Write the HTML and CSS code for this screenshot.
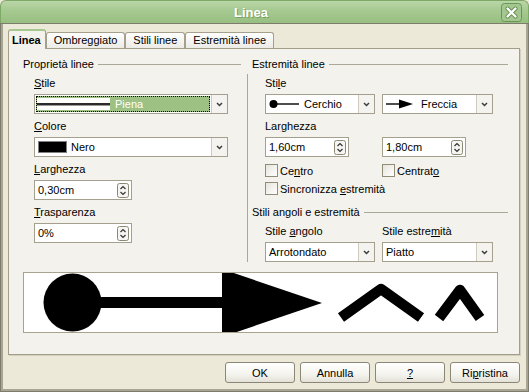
FILE: index.html
```html
<!DOCTYPE html>
<html>
<head>
<meta charset="utf-8">
<title>Linea</title>
<link rel="stylesheet" href="styles.css">
</head>
<body>
<div class="window">
  <div class="titlebar">
    <span class="title">Linea</span>
    <span class="close">
      <svg width="21" height="19" viewBox="0 0 21 19"><rect x="0.5" y="0.5" width="20" height="18" rx="3" fill="#a3c78e" stroke="#6a9558"/><path d="M6.5 5.5l8 8M14.5 5.5l-8 8" stroke="#5f8a4d" stroke-width="4" stroke-linecap="round"/><path d="M6.5 5.5l8 8M14.5 5.5l-8 8" stroke="#fff" stroke-width="2.3" stroke-linecap="round"/></svg>
    </span>
  </div>
  <div class="frame">
    <div class="tabs">
      <div class="tab active">Linea</div>
      <div class="tab">Ombreggiato</div>
      <div class="tab">Stili linee</div>
      <div class="tab">Estremità linee</div>
    </div>
    <div class="panel">
      <div class="columns">
        <div class="col left">
          <div class="legend"><span>Proprietà linee</span><i></i></div>
          <div class="group">
            <div class="field">
              <label><u>S</u>tile</label>
              <div class="combo wide">
                <div class="val sel"><span class="sample"><i></i></span><span class="piena">Piena</span></div>
                <div class="btn"><svg width="7" height="5" viewBox="0 0 7 5"><path d="M1 1l2.5 2.5L6 1" fill="none" stroke="#3c3c3c" stroke-width="1.5"/></svg></div>
              </div>
            </div>
            <div class="field">
              <label><u>C</u>olore</label>
              <div class="combo wide">
                <div class="val"><span class="swatch"></span><span class="nero">Nero</span></div>
                <div class="btn"><svg width="7" height="5" viewBox="0 0 7 5"><path d="M1 1l2.5 2.5L6 1" fill="none" stroke="#3c3c3c" stroke-width="1.5"/></svg></div>
              </div>
            </div>
            <div class="field">
              <label><u>L</u>arghezza</label>
              <div class="spinfield short">
                <span>0,30cm</span>
                <svg class="spin" width="12" height="15" viewBox="0 0 12 15"><rect x="0.5" y="0.5" width="11" height="14" rx="2" fill="#f6f5f1" stroke="#8c8876"/><path d="M3.5 6L6 3.5 8.5 6M3.5 9L6 11.5 8.5 9" fill="none" stroke="#333" stroke-width="1.2"/></svg>
              </div>
            </div>
            <div class="field">
              <label><u>T</u>rasparenza</label>
              <div class="spinfield short">
                <span>0%</span>
                <svg class="spin" width="12" height="15" viewBox="0 0 12 15"><rect x="0.5" y="0.5" width="11" height="14" rx="2" fill="#f6f5f1" stroke="#8c8876"/><path d="M3.5 6L6 3.5 8.5 6M3.5 9L6 11.5 8.5 9" fill="none" stroke="#333" stroke-width="1.2"/></svg>
              </div>
            </div>
          </div>
        </div>
        <div class="vsep"></div>
        <div class="col right">
          <div class="legend"><span>Estremità linee</span><i></i></div>
          <div class="group">
            <div class="field">
              <label>Sti<u>l</u>e</label>
              <div class="pair">
                <div class="combo">
                  <div class="val"><svg class="ico" width="30" height="12" viewBox="0 0 30 12"><circle cx="4.5" cy="6" r="4" fill="#000"/><path d="M8 6h22" stroke="#000" stroke-width="1.4"/></svg><span class="ctext">Cerchio</span></div>
                  <div class="btn"><svg width="7" height="5" viewBox="0 0 7 5"><path d="M1 1l2.5 2.5L6 1" fill="none" stroke="#3c3c3c" stroke-width="1.5"/></svg></div>
                </div>
                <div class="combo">
                  <div class="val"><svg class="ico" width="28" height="12" viewBox="0 0 28 12"><path d="M0 6h15" stroke="#000" stroke-width="1.4"/><path d="M13 1.5L27 6 13 10.5z" fill="#000"/></svg><span class="ftext">Freccia</span></div>
                  <div class="btn"><svg width="7" height="5" viewBox="0 0 7 5"><path d="M1 1l2.5 2.5L6 1" fill="none" stroke="#3c3c3c" stroke-width="1.5"/></svg></div>
                </div>
              </div>
            </div>
            <div class="field">
              <label>Lar<u>g</u>hezza</label>
              <div class="pair">
                <div class="spinfield num">
                  <span>1,60cm</span>
                  <svg class="spin" width="12" height="15" viewBox="0 0 12 15"><rect x="0.5" y="0.5" width="11" height="14" rx="2" fill="#f6f5f1" stroke="#8c8876"/><path d="M3.5 6L6 3.5 8.5 6M3.5 9L6 11.5 8.5 9" fill="none" stroke="#333" stroke-width="1.2"/></svg>
                </div>
                <div class="spinfield num">
                  <span>1,80cm</span>
                  <svg class="spin" width="12" height="15" viewBox="0 0 12 15"><rect x="0.5" y="0.5" width="11" height="14" rx="2" fill="#f6f5f1" stroke="#8c8876"/><path d="M3.5 6L6 3.5 8.5 6M3.5 9L6 11.5 8.5 9" fill="none" stroke="#333" stroke-width="1.2"/></svg>
                </div>
              </div>
            </div>
            <div class="checks">
              <div class="pair">
                <div class="check"><span class="cb"></span><span>Ce<u>n</u>tro</span></div>
                <div class="check"><span class="cb"></span><span>Centrat<u>o</u></span></div>
              </div>
              <div class="check"><span class="cb"></span><span>Sincronizza <u>e</u>stremità</span></div>
            </div>
          </div>
          <div class="legend second"><span>Stili angoli e estremità</span><i></i></div>
          <div class="group">
            <div class="field">
              <div class="pair">
                <label>Stile <u>a</u>ngolo</label>
                <label>Stile estre<u>m</u>ità</label>
              </div>
              <div class="pair">
                <div class="combo">
                  <div class="val">Arrotondato</div>
                  <div class="btn"><svg width="7" height="5" viewBox="0 0 7 5"><path d="M1 1l2.5 2.5L6 1" fill="none" stroke="#3c3c3c" stroke-width="1.5"/></svg></div>
                </div>
                <div class="combo">
                  <div class="val">Piatto</div>
                  <div class="btn"><svg width="7" height="5" viewBox="0 0 7 5"><path d="M1 1l2.5 2.5L6 1" fill="none" stroke="#3c3c3c" stroke-width="1.5"/></svg></div>
                </div>
              </div>
            </div>
          </div>
        </div>
      </div>
      <div class="preview">
        <svg width="473" height="59" viewBox="0 0 473 59">
          <circle cx="48.5" cy="29.5" r="29" fill="#000"/>
          <rect x="75" y="24" width="124" height="11" fill="#000"/>
          <path d="M198 -4L298 30 198 64z" fill="#000"/>
          <polyline points="317,44.5 357,16 397,44.5" fill="none" stroke="#000" stroke-width="10.5" stroke-linejoin="round"/>
          <polyline points="415,45 436,17 456,45" fill="none" stroke="#000" stroke-width="10.5" stroke-linejoin="round"/>
        </svg>
      </div>
    </div>
    <div class="buttons">
      <button>OK</button>
      <button>Annulla</button>
      <button><u>?</u></button>
      <button>Ri<u>p</u>ristina</button>
    </div>
  </div>
</div>
</body>
</html>
```

FILE: styles.css
```css
* { box-sizing: border-box; margin: 0; padding: 0; }
html, body { width: 529px; height: 392px; overflow: hidden; }
body {
  font-family: "Liberation Sans", Arial, sans-serif;
  font-size: 11px;
  color: #000;
  background: #ece9d8;
}
u { text-decoration: underline; text-underline-offset: 1px; }

.window { width: 529px; height: 392px; display: flex; flex-direction: column; }

.titlebar {
  height: 23px;
  flex: none;
  display: flex;
  align-items: center;
  padding-right: 6px;
  background: linear-gradient(#bad6a7 0%, #a7ca92 40%, #98bf81 100%);
  border: 1px solid #7ea866;
  border-bottom: 0;
  border-radius: 6px 6px 0 0;
}
.title {
  flex: 1;
  text-align: center;
  color: #fff;
  font-weight: bold;
  font-size: 13px;
  text-shadow: 1px 1px 0 #79a064;
}
.close { display: block; width: 21px; height: 19px; margin-top: 1px; }
.close svg { display: block; }

.frame {
  flex: 1;
  display: flex;
  flex-direction: column;
  border: 3px solid #a8a594;
  border-top: 0;
  outline: 1px solid #7e7c6c;
  outline-offset: -1px;
  padding: 6px 6px 0 5px;
}

.tabs { display: flex; align-items: flex-end; height: 19px; }
.tab {
  height: 16px;
  padding: 0 7px;
  line-height: 15px;
  border: 1px solid #a5a08d;
  border-bottom: 0;
  border-radius: 3px 3px 0 0;
  background: linear-gradient(#ffffff, #ecebe5);
  white-space: nowrap;
}
.tab.active {
  height: 20px;
  margin-bottom: -1px;
  position: relative;
  z-index: 1;
  padding: 0 4px 0 3px;
  line-height: 18px;
  font-weight: bold;
  background: #f3f2ec;
  border-color: #a5a08d;
  border-top: 2px solid #a6c78e;
}

.panel {
  width: 512px;
  height: 307px;
  border: 1px solid #a39e8a;
  background: #f3f2ec;
  box-shadow: 1px 1px 0 #d2cfc0;
  padding: 9px 11px 0 14px;
}

.columns { display: flex; }
.col.left { width: 218px; }
.col.right { width: 256px; }
.vsep { width: 1px; background: #aca899; margin: 16px 4px 0 6px; }

.legend { display: flex; align-items: center; height: 13px; line-height: 13px; white-space: nowrap; }
.legend i { flex: 1; height: 1px; background: #aca899; margin-left: 4px; }
.legend.second { margin-top: 11px; }

.left .group { padding-left: 11px; }
.right .group { padding-left: 13px; }

.field { margin-top: 6px; }
.field label { display: block; height: 13px; line-height: 13px; margin-bottom: 4px; white-space: nowrap; }

.pair { display: grid; grid-template-columns: 110px 111px; column-gap: 7px; }

.combo {
  display: flex;
  height: 20px;
  border: 1px solid #a5a08d;
  background: #fff;
}
.combo.wide { width: 194px; }
.combo .val {
  flex: 1;
  display: flex;
  align-items: center;
  padding-left: 3px;
  white-space: nowrap;
  overflow: hidden;
}
.combo .btn {
  width: 16px;
  flex: none;
  border-left: 1px solid #cfccbd;
  background: #f4f3ef;
  display: flex;
  align-items: center;
  justify-content: center;
}
.combo .btn svg { display: block; }

.combo .val.sel {
  margin: 1px;
  padding-left: 0;
  background: #9dc183;
  border: 1px dotted #000;
  color: #fff;
}
.sample { width: 73px; height: 12px; background: #fff; display: flex; align-items: center; }
.sample i { display: block; width: 100%; height: 3px; background: #2a2a2a; border-bottom: 1px solid #9a9a9a; }
.piena { margin-left: 5px; }

.swatch { width: 29px; height: 12px; background: #000; border: 1px solid #808080; }
.nero { margin-left: 4px; }

.ico { display: block; flex: none; }
.ctext { margin-left: 5px; }
.ftext { margin-left: 7px; }

.spinfield {
  display: flex;
  align-items: center;
  height: 20px;
  border: 1px solid #a5a08d;
  background: #fff;
  padding: 0 2px 0 3px;
}
.spinfield span { flex: 1; white-space: nowrap; }
.spinfield.short { width: 98px; }
.spinfield.num { width: 84px; }
.spin { display: block; flex: none; }

.checks { margin-top: 7px; display: flex; flex-direction: column; gap: 5px; }
.check { display: flex; align-items: center; height: 13px; white-space: nowrap; }
.cb {
  width: 13px;
  height: 13px;
  flex: none;
  border: 1px solid #918c77;
  background: linear-gradient(135deg, #e6e4da, #ffffff);
  margin-right: 2px;
}

.preview {
  margin-top: 10px;
  width: 475px;
  height: 61px;
  border: 1px solid #a8a38e;
  background: #fff;
  overflow: hidden;
}
.preview svg { display: block; }

.buttons { display: flex; justify-content: flex-end; gap: 5px; margin-top: 7px; }
.buttons button {
  width: 70px;
  height: 21px;
  font-family: "Liberation Sans", Arial, sans-serif;
  font-size: 11px;
  color: #000;
  border: 1px solid #8a8776;
  border-radius: 3px;
  background: linear-gradient(#ffffff, #f4f3ee 60%, #e3e1d7);
}
```
